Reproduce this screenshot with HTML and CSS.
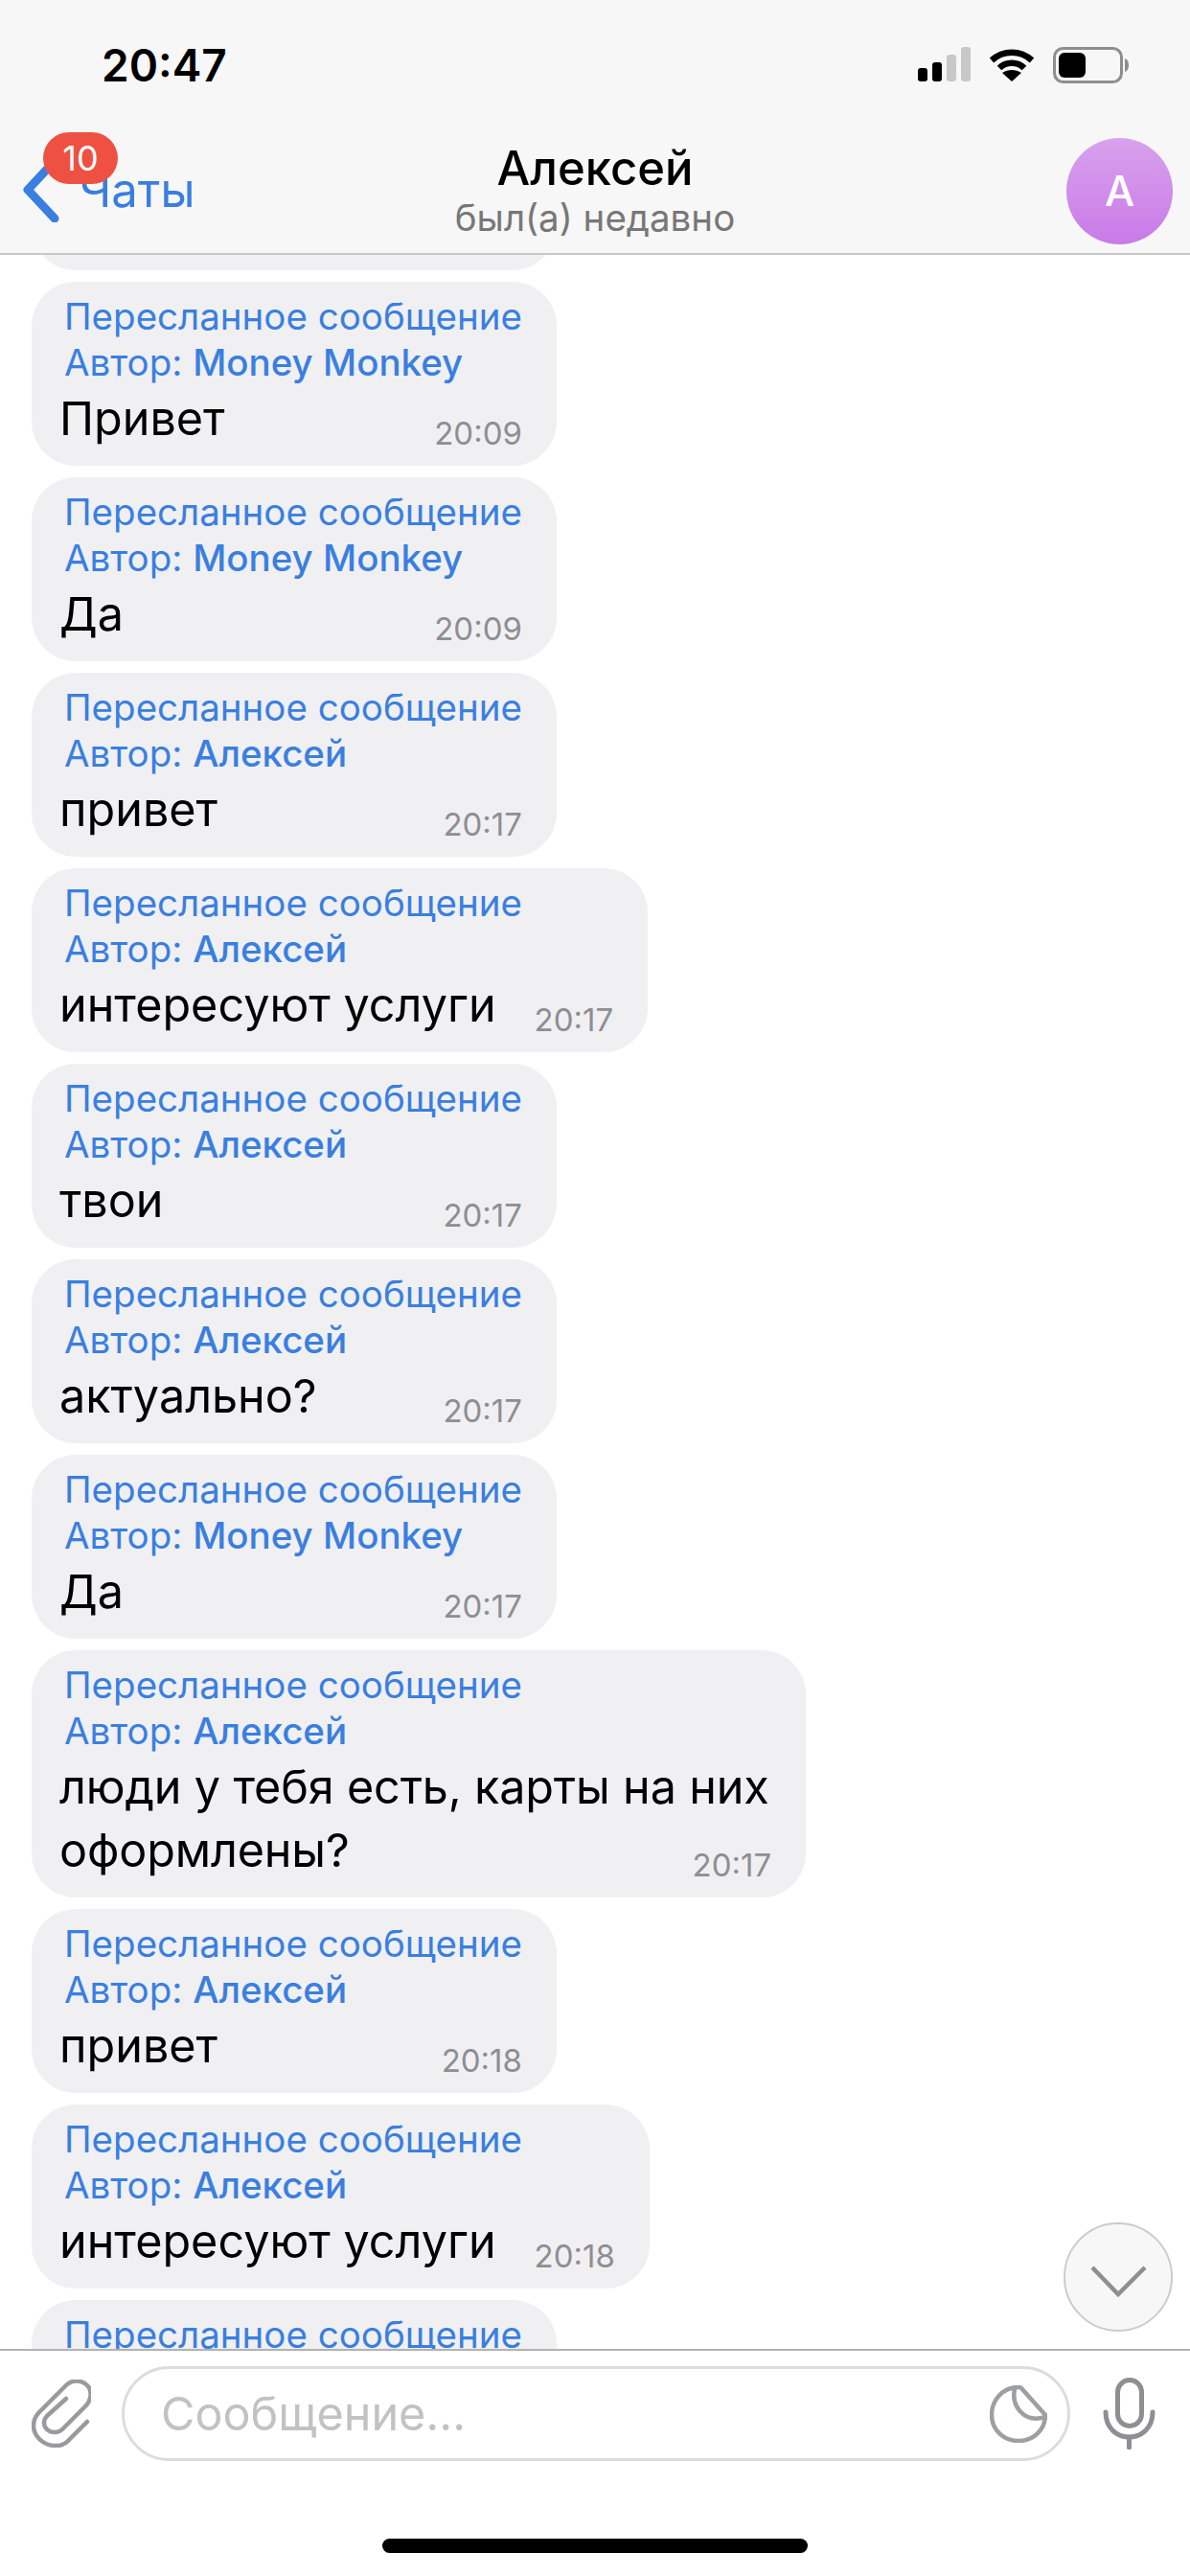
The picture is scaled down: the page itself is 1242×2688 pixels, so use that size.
FILE: index.html
```html
<!DOCTYPE html>
<html lang="ru">
<head>
    <meta charset="UTF-8">
    <meta name="viewport" content="width=device-width, initial-scale=1.0">
    <title>Алексей</title>
    <link rel="stylesheet" href="styles.css">
</head>
<body>
    <header class="header">
        <div class="statusbar">
            <span class="clock">20:47</span>
            <div class="status-icons">
                <svg class="icon-signal" width="55" height="36" viewBox="0 0 55 36">
                    <rect x="0" y="22" width="10" height="14" rx="3" fill="#000"/>
                    <rect x="15" y="16" width="10" height="20" rx="3" fill="#000"/>
                    <rect x="30" y="8" width="10" height="28" rx="3" fill="#c8c8c8"/>
                    <rect x="45" y="0" width="10" height="36" rx="3" fill="#c8c8c8"/>
                </svg>
                <svg class="icon-wifi" width="48" height="36" viewBox="0 0 48 36">
                    <path d="M3 14 C15 3 33 3 45 14" fill="none" stroke="#000" stroke-width="6.5"/>
                    <path d="M11 22 C18 15 30 15 37 22" fill="none" stroke="#000" stroke-width="6.5"/>
                    <path d="M24 36 L14 27 C20 23 28 23 34 27 Z" fill="#000"/>
                </svg>
                <svg class="icon-battery" width="79" height="38" viewBox="0 0 79 38">
                    <rect x="1.5" y="1.5" width="70" height="35" rx="9" fill="none" stroke="#8e8e8e" stroke-width="3"/>
                    <rect x="6" y="6" width="28" height="26" rx="6" fill="#000"/>
                    <path d="M75 12 C78 13 79 16 79 19 C79 22 78 25 75 26 Z" fill="#8e8e8e"/>
                </svg>
            </div>
        </div>
        <div class="navbar">
            <div class="back">
                <svg class="icon-back" width="40" height="68" viewBox="0 0 40 68">
                    <path d="M33 4 L5 34 L33 64" fill="none" stroke="#3a7fe0" stroke-width="9" stroke-linecap="round" stroke-linejoin="round"/>
                </svg>
                <span class="back-label">Чаты</span>
                <span class="badge">10</span>
            </div>
            <div class="title">
                <div class="title-name">Алексей</div>
                <div class="title-sub">был(а) недавно</div>
            </div>
            <div class="avatar">А</div>
        </div>
    </header>

    <main class="messages">
        <div class="bubble bubble-cut"></div>

        <div class="bubble">
            <div class="fwd">Пересланное сообщение</div>
            <div class="fwd">Автор: <b>Money Monkey</b></div>
            <div class="msg"><span class="msg-text">Привет</span><span class="msg-time">20:09</span></div>
        </div>
        <div class="bubble">
            <div class="fwd">Пересланное сообщение</div>
            <div class="fwd">Автор: <b>Money Monkey</b></div>
            <div class="msg"><span class="msg-text">Да</span><span class="msg-time">20:09</span></div>
        </div>
        <div class="bubble">
            <div class="fwd">Пересланное сообщение</div>
            <div class="fwd">Автор: <b>Алексей</b></div>
            <div class="msg"><span class="msg-text">привет</span><span class="msg-time">20:17</span></div>
        </div>
        <div class="bubble">
            <div class="fwd">Пересланное сообщение</div>
            <div class="fwd">Автор: <b>Алексей</b></div>
            <div class="msg"><span class="msg-text">интересуют услуги</span><span class="msg-time">20:17</span></div>
        </div>
        <div class="bubble">
            <div class="fwd">Пересланное сообщение</div>
            <div class="fwd">Автор: <b>Алексей</b></div>
            <div class="msg"><span class="msg-text">твои</span><span class="msg-time">20:17</span></div>
        </div>
        <div class="bubble">
            <div class="fwd">Пересланное сообщение</div>
            <div class="fwd">Автор: <b>Алексей</b></div>
            <div class="msg"><span class="msg-text">актуально?</span><span class="msg-time">20:17</span></div>
        </div>
        <div class="bubble">
            <div class="fwd">Пересланное сообщение</div>
            <div class="fwd">Автор: <b>Money Monkey</b></div>
            <div class="msg"><span class="msg-text">Да</span><span class="msg-time">20:17</span></div>
        </div>
        <div class="bubble">
            <div class="fwd">Пересланное сообщение</div>
            <div class="fwd">Автор: <b>Алексей</b></div>
            <div class="msg msg-long"><span class="msg-text">люди у тебя есть, карты на них<br>оформлены?</span><span class="msg-time">20:17</span></div>
        </div>
        <div class="bubble">
            <div class="fwd">Пересланное сообщение</div>
            <div class="fwd">Автор: <b>Алексей</b></div>
            <div class="msg"><span class="msg-text">привет</span><span class="msg-time">20:18</span></div>
        </div>
        <div class="bubble">
            <div class="fwd">Пересланное сообщение</div>
            <div class="fwd">Автор: <b>Алексей</b></div>
            <div class="msg"><span class="msg-text">интересуют услуги</span><span class="msg-time">20:18</span></div>
        </div>
        <div class="bubble">
            <div class="fwd">Пересланное сообщение</div>
        </div>

        <button class="scroll-down" type="button">
            <svg width="59" height="34" viewBox="0 0 59 34">
                <path d="M2 3 L29 31 L57 3" fill="none" stroke="#8e8e93" stroke-width="4.5"/>
            </svg>
        </button>
    </main>

    <footer class="composer">
        <div class="composer-row">
            <svg class="icon-clip" width="62" height="71" viewBox="0 0 62 71">
                <path d="M58 44 L38 64 C30 72 16 70 8 62 C0 54 0 42 8 34 L36 6 C42 0 52 0 58 6 C64 12 62 22 56 28 L32 52 C28 56 20 56 16 52 C12 48 12 42 16 38 L36 20" fill="none" stroke="#9a9a9e" stroke-width="4.5" stroke-linecap="round"/>
            </svg>
            <div class="input">
                <span class="placeholder">Сообщение...</span>
                <svg class="icon-sticker" width="60" height="60" viewBox="0 0 60 60">
                    <path d="M30 2 C14 2 2 15 2 31 C2 46 14 58 30 58 C46 58 58 46 58 31 L33 3 C32 2 31 2 30 2 Z" fill="none" stroke="#9da0a3" stroke-width="4.5" stroke-linejoin="round"/>
                    <path d="M26 3 C22 22 36 40 58 33" fill="none" stroke="#9da0a3" stroke-width="4.5"/>
                </svg>
            </div>
            <svg class="icon-mic" width="55" height="75" viewBox="0 0 55 75">
                <rect x="15.5" y="2.5" width="25" height="48" rx="12.5" fill="none" stroke="#8e8e93" stroke-width="5"/>
                <path d="M3 36 C3 52 14 62 27.5 62 C41 62 52 52 52 36" fill="none" stroke="#8e8e93" stroke-width="5" stroke-linecap="round"/>
                <path d="M27.5 62 L27.5 73" fill="none" stroke="#8e8e93" stroke-width="5" stroke-linecap="round"/>
            </svg>
        </div>
        <div class="home-bar"></div>
    </footer>
</body>
</html>
```

FILE: styles.css
```css
* {
    box-sizing: border-box;
}
html, body {
    margin: 0;
    height: 2688px;
}
body {
    display: flex;
    flex-direction: column;
    font-family: "Inter", "Liberation Sans", sans-serif;
    background: #fff;
    color: #000;
    overflow: hidden;
}

/* header */
.header {
    height: 266px;
    flex-shrink: 0;
    background: #f7f7f7;
    border-bottom: 2px solid #c8c8c8;
}
.statusbar {
    height: 132px;
    display: flex;
    justify-content: space-between;
    padding: 40px 64px 0 106px;
}
.clock {
    font-size: 46px;
    font-weight: 600;
    line-height: 56px;
}
.status-icons {
    display: flex;
    gap: 19px;
    padding-top: 9px;
}
.navbar {
    height: 132px;
    display: grid;
    grid-template-columns: 1fr auto 1fr;
    padding: 0 18px;
}
.back {
    position: relative;
    display: flex;
    align-items: center;
    gap: 18px;
    height: 132px;
    margin-left: 6px;
}
.back-label {
    color: #3a7fe0;
    font-size: 49px;
}
.badge {
    position: absolute;
    left: 21px;
    top: 6px;
    width: 78px;
    height: 54px;
    border-radius: 27px;
    background: #ee5142;
    color: #fff;
    font-size: 36px;
    line-height: 54px;
    text-align: center;
}
.title {
    text-align: center;
    padding-top: 15px;
}
.title-name {
    font-size: 49px;
    font-weight: 500;
    line-height: 58px;
}
.title-sub {
    color: #777;
    font-size: 38.5px;
    line-height: 44px;
}
.avatar {
    justify-self: end;
    align-self: start;
    margin-top: 12px;
    width: 111px;
    height: 111px;
    border-radius: 50%;
    background: linear-gradient(#d8a2ec, #c97ae8);
    color: #fff;
    font-size: 44px;
    font-weight: 500;
    line-height: 111px;
    text-align: center;
}

/* messages */
.messages {
    position: relative;
    flex: 1;
    min-height: 0;
    overflow: hidden;
    display: flex;
    flex-direction: column;
    align-items: flex-start;
    gap: 12px;
    padding-left: 33px;
}
.bubble {
    flex-shrink: 0;
    padding: 12px 36px 16px 29px;
    min-height: 192px;
    background: #f0f0f3;
    border-radius: 46px;
}
.bubble-cut {
    width: 548px;
    margin-top: -176px;
}
.fwd {
    margin-left: 5px;
    color: #3a7fe0;
    font-size: 38.5px;
    line-height: 48px;
    white-space: nowrap;
}
.fwd b {
    font-weight: 500;
}
.msg {
    display: flex;
    align-items: flex-end;
    justify-content: space-between;
    padding-top: 2px;
}
.msg-text {
    font-size: 48.5px;
    line-height: 66px;
    white-space: nowrap;
}
.msg-time {
    margin: 0 0 -2px 40px;
    color: #8e8e93;
    font-size: 33px;
    line-height: 40px;
}
.msg-long .msg-text {
    letter-spacing: -0.15px;
}
.msg-long .msg-time {
    margin-left: -80px;
}
.scroll-down {
    position: absolute;
    left: 1110px;
    top: 2053px;
    width: 114px;
    height: 114px;
    padding: 10px 0 0;
    border: 2px solid #ccc;
    border-radius: 50%;
    background: #f7f7f7;
}

/* composer */
.composer {
    height: 237px;
    flex-shrink: 0;
    border-top: 2px solid #b2b2b2;
    background: #fff;
}
.composer-row {
    display: flex;
    align-items: center;
    height: 131px;
    padding-left: 33px;
}
.input {
    display: flex;
    align-items: center;
    justify-content: space-between;
    width: 990px;
    height: 99px;
    margin: 0 34px 0 32px;
    padding: 0 21px 0 38px;
    border: 3px solid #dcdce0;
    border-radius: 50px;
}
.placeholder {
    color: #c2c2c2;
    font-size: 48.5px;
}
.home-bar {
    width: 444px;
    height: 15px;
    margin: 65px auto 0;
    border-radius: 8px;
    background: #000;
}
```
